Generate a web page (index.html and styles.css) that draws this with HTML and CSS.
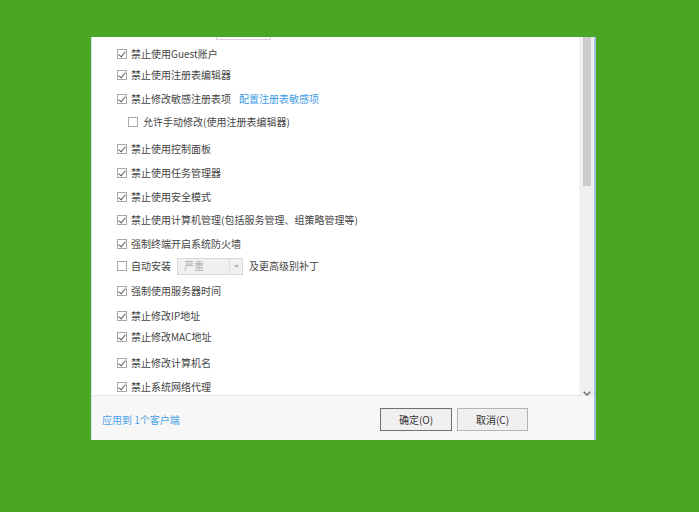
FILE: index.html
```
<!DOCTYPE html>
<html lang="zh-CN">
<head>
<meta charset="utf-8">
<link rel="stylesheet" href="styles.css">
</head>
<body>
<div class="dialog">
  <div class="content">
    <div class="list">
      <div class="cutbox"></div>
      <div class="row"><span class="cb on"></span><span>禁止使用Guest账户</span></div>
      <div class="row up3"><span class="cb on"></span><span>禁止使用注册表编辑器</span></div>
      <div class="row up2"><span class="cb on"></span><span>禁止修改敏感注册表项</span><a class="link">配置注册表敏感项</a></div>
      <div class="row sub up3"><span class="cb"></span><span>允许手动修改(使用注册表编辑器)</span></div>
      <div class="row"><span class="cb on"></span><span>禁止使用控制面板</span></div>
      <div class="row"><span class="cb on"></span><span>禁止使用任务管理器</span></div>
      <div class="row"><span class="cb on"></span><span>禁止使用安全模式</span></div>
      <div class="row"><span class="cb on"></span><span>禁止使用计算机管理(包括服务管理、组策略管理等)</span></div>
      <div class="row"><span class="cb on"></span><span>强制终端开启系统防火墙</span></div>
      <div class="row up2"><span class="cb"></span><span>自动安装</span>
        <span class="combo"><span class="combo-text">严重</span><span class="combo-arrow"><svg width="5" height="3" viewBox="0 0 5 3"><path d="M0 0H5L2.5 3Z" fill="#b5b5b5"/></svg></span></span>
        <span>及更高级别补丁</span></div>
      <div class="row up1"><span class="cb on"></span><span>强制使用服务器时间</span></div>
      <div class="row"><span class="cb on"></span><span>禁止修改IP地址</span></div>
      <div class="row up2"><span class="cb on"></span><span>禁止修改MAC地址</span></div>
      <div class="row"><span class="cb on"></span><span>禁止修改计算机名</span></div>
      <div class="row"><span class="cb on"></span><span>禁止系统网络代理</span></div>
    </div>
    <div class="scrollbar">
      <div class="thumb"></div>
      <div class="arrow"><svg width="8" height="5" viewBox="0 0 8 5"><path d="M0.7 0.7L4 4L7.3 0.7" fill="none" stroke="#6a6a6a" stroke-width="1.4"/></svg></div>
    </div>
  </div>
  <div class="footer">
    <a class="apply">应用到 1个客户端</a>
    <div class="buttons">
      <button class="btn default">确定(O)</button>
      <button class="btn">取消(C)</button>
    </div>
  </div>
</div>
</body>
</html>
```
FILE: styles.css
```
html, body {
  margin: 0;
  padding: 0;
}
body {
  background: #4ba625;
  width: 699px;
  height: 512px;
  overflow: hidden;
  font-family: "Noto Sans CJK SC", "Noto Sans", sans-serif;
  font-size: 10px;
  color: #454545;
}
.dialog {
  margin-left: 91px;
  margin-top: 37px;
  width: 502px;
  height: 403px;
  background: #fff;
  border-left: 1px solid #d6e4f2;
  border-right: 2px solid #a3c0e4;
  display: flex;
  flex-direction: column;
}
.content {
  height: 358px;
  display: flex;
}
.list {
  flex: 1;
}
.cutbox {
  margin-left: 124px;
  width: 53px;
  height: 2px;
  border: 1px solid #d4d4d4;
  border-top: none;
  margin-bottom: 2px;
}
.row {
  box-sizing: border-box;
  height: 23.8px;
  display: flex;
  align-items: center;
  padding-left: 25px;
  white-space: nowrap;
  line-height: 1;
}
.row.up1 { padding-bottom: 2px; }
.row.up2 { padding-bottom: 4px; }
.row.up3 { padding-bottom: 6px; }
.row.sub {
  padding-left: 36px;
}
.cb {
  width: 8px;
  height: 8px;
  border: 1px solid #a8a8a8;
  background: #fff;
  margin-right: 4px;
  position: relative;
  flex: none;
}
.row.sub .cb {
  margin-right: 5px;
}
.cb.on::after {
  content: "";
  position: absolute;
  left: 2px;
  top: 0px;
  width: 3px;
  height: 6px;
  border-right: 1px solid #5a5a5a;
  border-bottom: 1px solid #5a5a5a;
  transform: rotate(40deg);
}
.link {
  color: #3d9be6;
  margin-left: 8px;
}
.combo {
  margin: 0 6px;
  width: 64px;
  height: 15px;
  border: 1px solid #d8d8d8;
  background: #f0f0f0;
  display: flex;
  align-items: center;
}
.combo-text {
  flex: 1;
  color: #b0b0b0;
  padding-left: 6px;
}
.combo-arrow {
  width: 12px;
  height: 15px;
  border-left: 1px solid #dcdcdc;
  display: flex;
  align-items: center;
  justify-content: center;
}
.scrollbar {
  width: 14px;
  background: #f0f0f0;
  position: relative;
  border-left: 1px solid #f5f5f5;
}
.thumb {
  margin-left: 3px;
  width: 8px;
  height: 149px;
  background: #cdcdcd;
}
.arrow {
  position: absolute;
  left: 3px;
  top: 347px;
}
.footer {
  height: 44px;
  border-top: 1px solid #e6e6e6;
  background: #f7f7f7;
  display: flex;
  align-items: center;
  padding-left: 10px;
  padding-right: 66px;
}
.apply {
  color: #4aa1e8;
  flex: 1;
  margin-top: 2px;
}
.buttons {
  display: flex;
  gap: 5px;
  margin-top: 2px;
}
.btn {
  font-family: "Noto Sans CJK SC", "Noto Sans", sans-serif;
  font-size: 10px;
  color: #333;
  height: 23px;
  width: 71px;
  background: #f0f0f0;
  border: 1px solid #b4b4b4;
  padding: 0;
  margin: 0;
}
.btn.default {
  width: 72px;
  border-color: #6f6f6f;
}
```
